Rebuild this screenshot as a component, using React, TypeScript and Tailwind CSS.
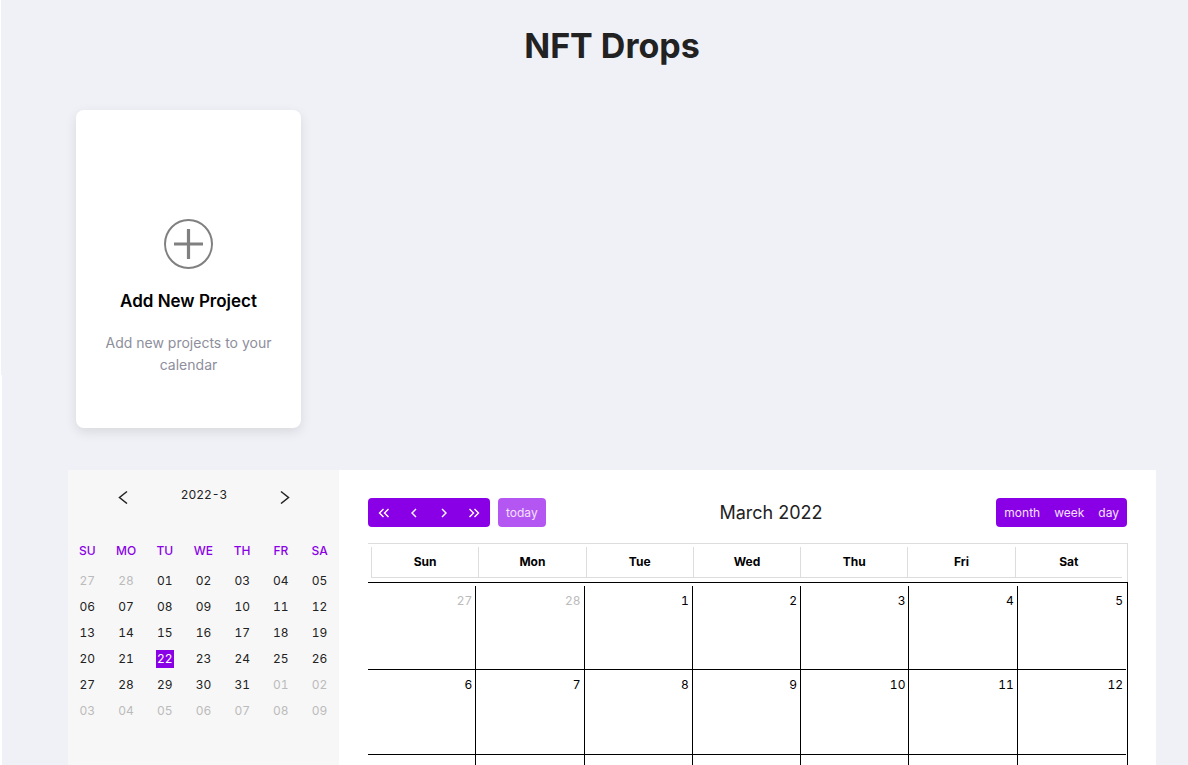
import { useState, type ReactNode } from 'react';

const WEEKDAYS = ['Sun', 'Mon', 'Tue', 'Wed', 'Thu', 'Fri', 'Sat'];
const SHORT_DAYS = ['SU', 'MO', 'TU', 'WE', 'TH', 'FR', 'SA'];

type Day = { date: number; outside: boolean };

const DAYS: Day[] = [
  ...[27, 28].map((date) => ({ date, outside: true })),
  ...Array.from({ length: 31 }, (_, i) => ({ date: i + 1, outside: false })),
  ...Array.from({ length: 9 }, (_, i) => ({ date: i + 1, outside: true })),
];

const WEEKS: Day[][] = Array.from({ length: 6 }, (_, i) => DAYS.slice(i * 7, i * 7 + 7));

function Chevron({ points, size }: { points: string[]; size: number }) {
  return (
    <svg width={size} height={size} viewBox="0 0 14 14" fill="none" stroke="currentColor" strokeWidth="1.4" aria-hidden="true">
      {points.map((p) => (
        <polyline key={p} points={p} />
      ))}
    </svg>
  );
}

function AddProjectCard() {
  return (
    <button
      type="button"
      className="ml-2 flex h-[318px] w-[225px] flex-col items-center rounded-lg bg-white px-5 pt-[109px] text-center shadow-[0_4px_12px_rgba(0,0,0,0.1)]"
    >
      <svg width="49" height="50" viewBox="0 0 49 50" fill="none" stroke="#808080" aria-hidden="true">
        <ellipse cx="24.5" cy="25" rx="23.5" ry="24" strokeWidth="2" />
        <path d="M24.500 10v30M10 25h29" strokeWidth="3.200" />
      </svg>
      <span className="mt-5 text-[17px] leading-6 font-semibold text-black">Add New Project</span>
      <span className="mt-[19px] text-sm leading-[22px] text-[#8e8e9c]">Add new projects to your calendar</span>
    </button>
  );
}

function MiniCalendar() {
  const [selected, setSelected] = useState(22);
  return (
    <aside className="w-[271px] shrink-0 bg-[#f7f7f7] text-xs text-[#222] tabular-nums">
      <div className="flex h-[50px] justify-between pt-4 pr-[46px] pl-[47px]">
        <button type="button" aria-label="Previous month" className="flex h-[22px] w-4 items-center justify-center">
          <svg width="10" height="14" viewBox="0 0 10 14" fill="none" stroke="currentColor" strokeWidth="1.5" aria-hidden="true">
            <path d="M9 1.500 1.500 7.500 9 13.500" />
          </svg>
        </button>
        <span className="leading-[18px]">2022-3</span>
        <button type="button" aria-label="Next month" className="flex h-[22px] w-4 items-center justify-center">
          <svg width="10" height="14" viewBox="0 0 10 14" fill="none" stroke="currentColor" strokeWidth="1.5" aria-hidden="true">
            <path d="M1 1.500 8.500 7.500 1 13.500" />
          </svg>
        </button>
      </div>
      <table className="mt-4 w-full table-fixed border-collapse text-center">
        <thead>
          <tr className="h-8">
            {SHORT_DAYS.map((d) => (
              <th key={d} className="p-0 pb-0.5 font-medium text-[#8a00e6]">
                {d}
              </th>
            ))}
          </tr>
        </thead>
        <tbody>
          {WEEKS.map((week, i) => (
            <tr key={i} className="h-[26px]">
              {week.map((day, j) => {
                const tone = day.outside
                  ? 'text-[#bbb]'
                  : day.date === selected
                    ? 'bg-[#8a00e6] text-white'
                    : '';
                return (
                  <td key={j} className="p-0">
                    <button
                      type="button"
                      onClick={() => !day.outside && setSelected(day.date)}
                      className={`h-[18px] w-[18px] whitespace-nowrap leading-[18px] ${tone}`}
                    >
                      {String(day.date).padStart(2, '0')}
                    </button>
                  </td>
                );
              })}
            </tr>
          ))}
        </tbody>
      </table>
    </aside>
  );
}

function ToolButton({ label, children, className }: { label?: string; children: ReactNode; className: string }) {
  return (
    <button type="button" aria-label={label} className={`flex h-full items-center justify-center ${className}`}>
      {children}
    </button>
  );
}

function MonthCalendar() {
  return (
    <section className="min-w-0 flex-1 bg-white pt-7 pr-7 pb-7 pl-[29px]">
      <div className="flex items-center justify-between pr-px text-xs text-[#f3e0ff]">
        <div className="flex h-[29px] gap-2">
          <div className="flex rounded-sm bg-[#8a00e6] px-px text-white">
            <ToolButton label="Previous year" className="w-[30px]">
              <Chevron size={14} points={['6.5,3 2.500,7 6.500,11', '11.500,3 7.500,7 11.500,11']} />
            </ToolButton>
            <ToolButton label="Previous month" className="w-[30px]">
              <Chevron size={14} points={['9,3 5,7 9,11']} />
            </ToolButton>
            <ToolButton label="Next month" className="w-[30px]">
              <Chevron size={14} points={['5,3 9,7 5,11']} />
            </ToolButton>
            <ToolButton label="Next year" className="w-[30px]">
              <Chevron size={14} points={['2.500,3 6.500,7 2.500,11', '7.500,3 11.500,7 7.500,11']} />
            </ToolButton>
          </div>
          <ToolButton className="rounded-sm bg-[#b457f2] px-2">today</ToolButton>
        </div>
        <h2 className="text-lg leading-6 text-[#222]">March 2022</h2>
        <div className="flex h-[29px] rounded-sm bg-[#8a00e6] px-px">
          <ToolButton className="px-[7px]">month</ToolButton>
          <ToolButton className="px-[7px]">week</ToolButton>
          <ToolButton className="px-[7px]">day</ToolButton>
        </div>
      </div>

      <div className="mt-4 border-t border-r border-[#ddd] pt-[3px] pr-[5px] pb-1 pl-[3px]">
        <table className="w-full table-fixed border-separate border-spacing-0 text-xs text-black">
          <thead>
            <tr className="h-[31px]">
              {WEEKDAYS.map((d) => (
                <th key={d} scope="col" className="border-b border-l border-[#ddd] p-0 font-bold">
                  {d}
                </th>
              ))}
            </tr>
          </thead>
        </table>
      </div>
      <div className="border-t border-r border-black pt-[3px] pr-px">
        <table className="w-full table-fixed border-separate border-spacing-0 text-xs text-black tabular-nums">
          <tbody>
            {WEEKS.map((week, i) => (
              <tr key={i} className="h-[85px] first:h-[84px]">
                {week.map((day, j) => (
                  <td
                    key={j}
                    className={`border-b border-r border-black px-[3px] pt-1.5 pb-0 text-right align-top leading-[18px] last:border-r-0 ${day.outside ? 'text-[#bbb]' : ''}`}
                  >
                    {day.date}
                  </td>
                ))}
              </tr>
            ))}
          </tbody>
        </table>
      </div>
    </section>
  );
}

export default function App() {
  return (
    <div className="flex min-h-screen bg-[#f0f1f6] font-['Inter','Liberation_Sans',sans-serif]">
      <div className="flex w-0.5 shrink-0 flex-col">
        <div className="h-[375px] w-px bg-white" />
        <div className="flex-1 bg-white" />
      </div>
      <main className="min-w-0 flex-1 pt-6 pr-8 pl-[66px]">
        <h1 className="text-center text-[34px] leading-[44px] font-bold text-[#222]">NFT Drops</h1>
        <div className="mt-[42px]">
          <AddProjectCard />
        </div>
        <div className="mt-[42px] flex">
          <MiniCalendar />
          <MonthCalendar />
        </div>
      </main>
    </div>
  );
}
